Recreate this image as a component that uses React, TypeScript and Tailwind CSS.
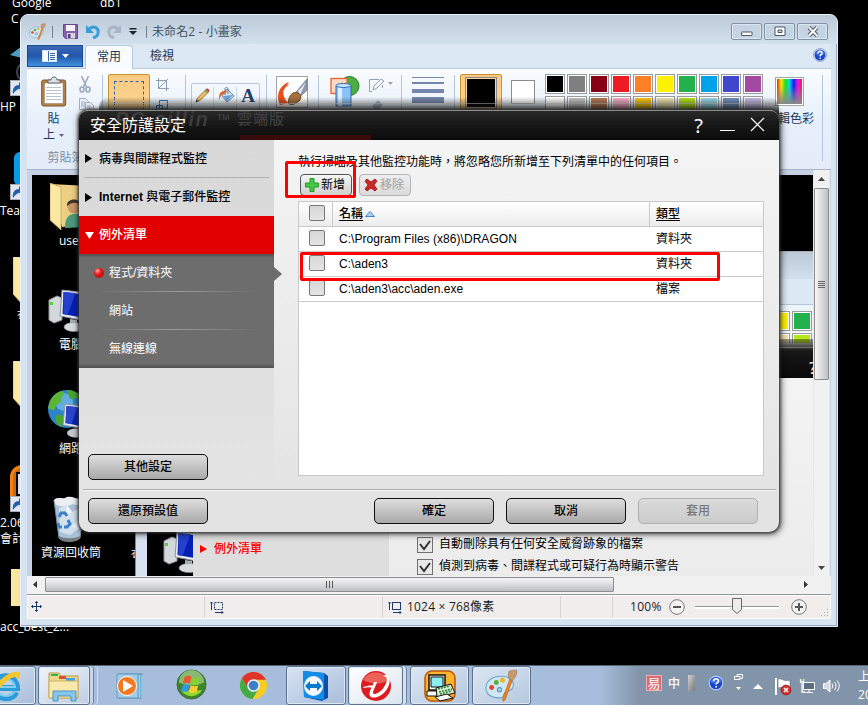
import { FC, ReactNode } from "react";

const uiFont = "font-['Open_Sans','Noto_Sans_CJK_TC',sans-serif]";
const dialogFont = "font-['Liberation_Sans','Noto_Sans_CJK_TC',sans-serif]";

const paletteTop = ["#000000", "#7f7f7f", "#880015", "#ed1c24", "#ff7f27", "#fff200", "#22b14c", "#00a2e8", "#3f48cc", "#a349a4"];
const paletteBottom = ["#ffffff", "#c3c3c3", "#b97a57", "#ffaec9", "#ffc90e", "#efe4b0", "#b5e61d", "#99d9ea", "#7092be", "#c8bfe7"];

const rows = [
  { name: "C:\\Program Files (x86)\\DRAGON", type: "資料夾" },
  { name: "C:\\aden3", type: "資料夾" },
  { name: "C:\\aden3\\acc\\aden.exe", type: "檔案" },
];

/* ---------- icons ---------- */

const PaletteIcon: FC<{ size: number }> = ({ size }) => (
  <svg width={size} height={size} viewBox="0 0 32 32">
    <path d="M1 20C0 11 8 7 16 7c9 0 13 5 11 11-2 5-6 2-8 5s0 5-5 5C7 28 2 26 1 20z" fill="#cfe6f5" stroke="#6fa3c8" strokeWidth="1" />
    <circle cx="6.500" cy="18" r="2.400" fill="#e5432e" />
    <circle cx="11" cy="13" r="2.400" fill="#58b030" />
    <circle cx="17" cy="11" r="2.400" fill="#f0b51e" />
    <circle cx="14" cy="20" r="2" fill="#a7cde6" stroke="#5c90b6" />
    <path d="M17 29l7-19 2.500 1-7 19c-1 2-3 1-2.500-1z" fill="#ee8122" stroke="#b85b12" strokeWidth=".5" />
    <path d="M23.500 10c-1-3-1-6 0-8l7-1c1 4-1 7-4 10z" fill="#c99a6b" stroke="#95663a" strokeWidth=".5" />
  </svg>
);

const HelpIcon: FC<{ size: number }> = ({ size }) => (
  <svg width={size} height={size} viewBox="0 0 16 16">
    <circle cx="8" cy="8" r="7.5" fill="#e4edfb" stroke="#6f93d6" strokeWidth=".8" />
    <circle cx="8" cy="8" r="6.3" fill="#1b45c8" />
    <path d="M2.5 7a5.6 5.6 0 0 1 11 0c-3 2-8 2-11 0z" fill="#5a8cf0" opacity=".6" />
    <path d="M5.6 6.2c0-3.4 5-3 4.8-.2-.1 1.7-2.3 1.6-2.3 3.6M8.1 11v1.6" fill="none" stroke="#fff" strokeWidth="1.7" />
  </svg>
);

const FolderIcon: FC<{ className?: string }> = ({ className }) => (
  <svg className={className} width="40" height="48" viewBox="0 0 40 48">
    <path d="M10 1l30 2v40l-30-3z" fill="#e8c870" />
    <path d="M0 0l3-1 14 3v40l-8 5L0 37z" fill="#fbe9a3" stroke="#d3b35c" strokeWidth=".8" />
    <path d="M10 3v43l7-4V3z" fill="#e4c46b" />
  </svg>
);

const UserFolderIcon = () => (
  <svg width="40" height="48" viewBox="0 0 40 48">
    <path d="M0 1l40 2v38l-28 3z" fill="#eccf82" />
    <path d="M0 0l11 4v43L0 37z" fill="#fbe9a3" stroke="#c8a652" strokeWidth=".8" />
    <path d="M15 45c0-13 6-15 13-14h9v13z" fill="#4c9a79" />
    <circle cx="24" cy="24" r="6.5" fill="#c99468" />
    <path d="M17 23c-1-8 13-9 14-1-5-3-9-3-14 1z" fill="#39342d" />
  </svg>
);

const ComputerIcon = () => (
  <svg width="46" height="44" viewBox="0 0 46 44">
    <path d="M1 11l8-4 5 2v22l-8 3-5-3z" fill="#d5d8da" stroke="#8e9296" />
    <rect x="2" y="13" width="3" height="3" fill="#56d432" />
    <path d="M14 1l26 3-2 28-26-5z" fill="#e7e9ec" stroke="#8b929b" />
    <path d="M15.500 3l23 3-2 23-22-4z" fill="#0420b4" />
    <path d="M15.500 3l12 1-8 22-4-1z" fill="#2440cc" />
    <path d="M22 30l7 1v5h-7z" fill="#aaaeb3" />
    <ellipse cx="26" cy="38" rx="10" ry="4.500" fill="#d9dcdf" stroke="#8f9499" strokeWidth=".6" />
  </svg>
);

const NetworkIcon = () => (
  <svg width="44" height="50" viewBox="0 0 44 50">
    <circle cx="20" cy="20" r="19" fill="#2d85c8" />
    <circle cx="17" cy="13" r="9" fill="#76bfe8" opacity=".7" />
    <path d="M3 12C8 3 15 1 17 3c1 4-4 4-2 8-3 5-6 3-7 9-2 2-6 0-7-1z" fill="#5cb534" />
    <path d="M20 1c8 0 14 5 17 10l-8-2-6 1zM9 27c4-3 9 0 8 4l-3 7c-3-2-7-6-5-11z" fill="#4aa52b" />
    <path d="M18 15l26 3v23l-28-5z" fill="#e2e6ee" stroke="#8c94a3" />
    <path d="M19.500 17l24 3v19l-25-5z" fill="#0822b6" />
    <path d="M19.500 17l11 1-6 17-6-1z" fill="#2a47cc" />
    <ellipse cx="29" cy="44" rx="9" ry="4.500" fill="#c4c8cc" />
  </svg>
);

const RecycleBinIcon = () => (
  <svg width="34" height="46" viewBox="0 0 34 46">
    <path d="M1 4h31l-5 38c-3 4-18 4-21 0z" fill="#a9c2d8" stroke="#8296a8" />
    <path d="M1 4c4-4 9 0 13-3 6-1 10 3 18 2l-2 8-10-3-8 3-9-2z" fill="#eceff2" />
    <path d="M6 12l8-3 5 7 9-5-2 22-9 6-10-3z" fill="#d3e1ee" />
    <path d="M14 9l5 7-7 5zM19 30l8-8-2 12z" fill="#eef4f9" />
    <path d="M6 21l2-4h4l2 3M15 24l2 4-3 3h-3M9 31H6l-1-4" fill="none" stroke="#3d7fcb" strokeWidth="3" />
    <path d="M6 40c5 3 16 3 21 0l-.5 3c-4 4-17 4-20 0z" fill="#777c80" />
  </svg>
);

const ShortcutIcon = () => (
  <svg width="16" height="16" viewBox="0 0 16 16">
    <rect x=".5" y=".5" width="15" height="15" fill="#e4e8ee" stroke="#a8adb5" />
    <path d="M3 14C2 8 5 5 9 5V2l6 5-5 5V9c-3 0-5 2-7 5z" fill="#2361b3" />
  </svg>
);

const ClipboardIcon = () => (
  <svg width="26" height="32" viewBox="0 0 26 32">
    <rect x=".7" y="4" width="24" height="26" rx="2" fill="#b3814b" stroke="#7b542a" />
    <rect x="3.500" y="7" width="18.500" height="20.500" fill="#fff" stroke="#94785c" strokeWidth=".5" />
    <path d="M5 11.500h15M5 14.500h15M5 17.500h15M5 20.500h15M5 23.500h15" stroke="#b7c2cf" />
    <path d="M7 7V4h3c0-4 6-4 6 0h3v3z" fill="#dde1e6" stroke="#626970" />
  </svg>
);

const CutIcon = () => (
  <svg width="12" height="17" viewBox="0 0 12 17" fill="none" stroke="#9aa9bd" strokeWidth="1.6">
    <path d="M2.500 0l5 11M9.500 0l-5 11" />
    <ellipse cx="3" cy="13.500" rx="2" ry="2.500" />
    <ellipse cx="9" cy="13.500" rx="2" ry="2.500" />
  </svg>
);

const CopyIcon = () => (
  <svg width="16" height="15" viewBox="0 0 16 15" fill="#eaf0f7" stroke="#a3b0c2">
    <path d="M.5.5h6l3 3v8h-9zM2 4h4M2 6h4M2 8h4" />
    <path d="M6.500 4.500h5l3 3v7h-8zM8 8h4M8 10h5M8 12h5" />
  </svg>
);

const PencilIcon = () => (
  <svg width="17" height="17" viewBox="0 0 17 17">
    <path d="M2.500 14.500L3.500 11 12 2.500l2.500 2.500-8.500 8.500z" fill="#f0bd62" stroke="#85602b" strokeWidth=".8" />
    <path d="M12 2.500c1-2 4.500.5 2.500 2.500z" fill="#dc4855" stroke="#a33" strokeWidth=".5" />
    <path d="M10.500 4L12 2.500 14.500 5 13 6.500z" fill="#74a265" />
    <path d="M1.500 15.500l1-3 2 2z" fill="#333" />
  </svg>
);

const BucketIcon = () => (
  <svg width="17" height="17" viewBox="0 0 17 17">
    <path d="M9 2l7 7-7 6-5-6z" fill="#d6e8f8" stroke="#5b86ad" />
    <path d="M5 9l10-1-6 6z" fill="#6ba0d4" />
    <path d="M7 8V2c0-2 3-2 3 0v5" fill="none" stroke="#6c7a89" />
    <path d="M9 4C3 3 0 7 1.500 13c1-4 2-6 6-7z" fill="#e95c24" />
  </svg>
);

const BrushIcon = () => (
  <svg width="32" height="32" viewBox="0 0 32 32">
    <rect x=".5" y=".5" width="31" height="31" fill="#fff" stroke="#a4a4a4" />
    <path d="M4 29C-1 19 4 9 13 6l-2 3 3-1c-9 5-8 12-2 19z" fill="#e6501e" />
    <path d="M20 16L31 3v11l-7 7z" fill="#8f9bad" stroke="#5e6a7c" strokeWidth=".6" />
    <path d="M22 15l8-9-6 13z" fill="#dde4ee" />
    <path d="M12 27c1-8 5-12 10-10 5 3 3 8-2 10-3 2-6 2-8 0z" fill="#a8703f" stroke="#76461f" />
  </svg>
);

const ShapesIcon = () => (
  <svg width="31" height="31" viewBox="0 0 31 31">
    <circle cx="19.500" cy="10" r="9.500" fill="#4cae42" stroke="#277c28" />
    <rect x="1" y="2.500" width="16" height="15" fill="#fcd9c5" stroke="#e5632b" strokeWidth="1.300" />
    <path d="M6 10v20h15V10z" fill="#8cc1f4" stroke="#2b6fb9" />
    <path d="M8 11v19h4V11z" fill="#dcefff" />
    <ellipse cx="13.500" cy="9.500" rx="7.500" ry="2" fill="#c7e2fb" stroke="#2b6fb9" />
  </svg>
);

const GlyphMove = () => (
  <svg width="12" height="12" viewBox="0 0 12 12" stroke="#1d3c6e" fill="none">
    <path d="M5.500 .5v10M.5 5.500h10M4 2L5.500.5 7 2M4 9l1.500 1.500L7 9M2 4L.5 5.500 2 7M9 4l1.500 1.500L9 7" />
  </svg>
);

const GlyphSize: FC<{ dashed?: boolean }> = ({ dashed }) => (
  <svg width="14" height="13" viewBox="0 0 14 13" stroke="#1d3c6e" fill="none">
    <rect x="4.500" y="1.500" width="8" height="7" strokeDasharray={dashed ? "2 1" : undefined} />
    <path d="M1.500 9V1M0 2.500L1.500 1 3 2.500M5 11.500h8M11.500 10l1.500 1.500-1.500 1.500" />
  </svg>
);

const Swatch: FC<{ color: string }> = ({ color }) => (
  <div className="h-5 w-5 border border-[#9b9b9b] bg-white p-px">
    <div className="h-full w-full" style={{ backgroundColor: color }} />
  </div>
);

/* ---------- desktop ---------- */

const DesktopIcons = () => (
  <div className={`absolute inset-0 text-[12px] leading-4 text-white ${uiFont}`}>
    <span className="absolute left-[12px] -top-[5px]">Google</span>
    <span className="absolute left-[100px] -top-[5px]">db1</span>
    <span className="absolute left-[11px] top-[11px]">C</span>
    <svg className="absolute left-[10px] top-[46px]" width="12" height="36" viewBox="0 0 12 36">
      <path d="M0 9L12 0v12z" fill="#4c9cc5" />
      <circle cx="17" cy="26" r="10" fill="none" stroke="#3c4048" strokeWidth="2" />
    </svg>
    <div className="absolute left-[10px] top-[80px]"><ShortcutIcon /></div>
    <span className="absolute left-0 top-[99px]">HP</span>
    <div className="absolute left-[14px] top-[152px] h-[34px] w-10 rounded-md bg-[#0b9be6]" />
    <div className="absolute left-[10px] top-[184px]"><ShortcutIcon /></div>
    <span className="absolute left-0 top-[203px]">Tea</span>
    <FolderIcon className="absolute left-[13px] top-[257px]" />
    <span className="absolute left-[17px] top-[308px] text-[10px] leading-[12px]">衣</span>
    <FolderIcon className="absolute left-[13px] top-[361px]" />
    <div className="absolute left-[10px] top-[465px] h-[46px] w-12 rounded-xl border-[3px] border-[#f58010] bg-[#c06b1a]">
      <div className="ml-[3px] mt-1 h-6 w-6 border-2 border-black bg-[#ddd]" />
    </div>
    <div className="absolute left-[10px] top-[496px]"><ShortcutIcon /></div>
    <span className="absolute left-0 top-[515px]">2.06</span>
    <span className="absolute left-0 top-[531px]">會計</span>
    <div className="absolute left-[11px] top-[569px] h-[37px] w-10 bg-gradient-to-r from-[#fbe9a3] to-[#f0d27a]" />
    <span className="absolute left-0 top-[619px]">acc_best_2...</span>
  </div>
);

/* ---------- paint window ---------- */

const TitleBar = () => (
  <div className="flex h-[29px] shrink-0 items-center rounded-t-md bg-gradient-to-b from-[#bccad7] to-[#d3e1ee] pl-2 pr-[9px] pt-1">
    <PaletteIcon size={17} />
    <div className="ml-[6px] h-3 w-px bg-[#71808e]" />
    <svg className="ml-[10px]" width="15" height="15" viewBox="0 0 15 15">
      <path d="M.5.5h14v14h-12l-2-2z" fill="#8960ae" stroke="#694591" />
      <rect x="3" y="1" width="9" height="6" fill="#f4f1f8" />
      <rect x="4" y="9" width="8" height="5.500" fill="#d8d4df" />
      <rect x="5" y="10" width="2.500" height="4" fill="#51406b" />
    </svg>
    <svg className="ml-2" width="14" height="15" viewBox="0 0 14 15">
      <path d="M0 1v8h8z" fill="#399fdc" />
      <path d="M3 5c5-4 10-1 9 4 0 2-2 4-5 5" fill="none" stroke="#399fdc" strokeWidth="3" />
    </svg>
    <svg className="ml-[7px]" width="14" height="15" viewBox="0 0 14 15">
      <path d="M14 1v8H6z" fill="#a7b6c7" />
      <path d="M11 5C6 1 1 4 2 9c0 2 2 4 5 5" fill="none" stroke="#a7b6c7" strokeWidth="3" />
    </svg>
    <svg className="ml-2" width="8" height="7" viewBox="0 0 8 7"><path d="M.5 0h7v1.500h-7zM0 3h8L4 7z" fill="#1c2229" /></svg>
    <div className="ml-[9px] h-3 w-px bg-[#71808e]" />
    <span className="ml-[5px] text-[12px] tracking-[0.1px] text-[#42525f]">未命名2 - 小畫家</span>
    <div className="ml-auto flex gap-[2px]">
      {["min", "max", "close"].map((kind) => (
        <div key={kind} className="flex h-[17px] w-[31px] items-center justify-center rounded-[2px] border border-[#8393a7] bg-[#c5d4e2] shadow-[inset_0_0_0_1px_#dbe6f0]">
          <svg width="12" height="11" viewBox="0 0 12 11">
            {kind === "min" && <rect x=".5" y="6" width="10.500" height="3.500" rx=".5" fill="#fff" stroke="#4c5768" />}
            {kind === "max" && <path d="M1 1h10v8.500H1zM4 4v2.500h4V4z" fill="#fff" fillRule="evenodd" stroke="#4c5768" />}
            {kind === "close" && (
              <>
                <path d="M2 1.500l8 8M10 1.500l-8 8" stroke="#4c5768" strokeWidth="4" />
                <path d="M2 1.500l8 8M10 1.500l-8 8" stroke="#fff" strokeWidth="2" />
              </>
            )}
          </svg>
        </div>
      ))}
    </div>
  </div>
);

const TabRow = () => (
  <div className="flex h-[25px] shrink-0 items-start border-b border-[#b8c9de] bg-[#dde8f5] text-[12px] text-[#1e395b]">
    <div className="mt-px flex h-[22px] w-14 items-center justify-center gap-[5px] border border-[#1b4a91] bg-gradient-to-b from-[#3968b5] via-[#2257ab] to-[#4192df]">
      <svg width="15" height="12" viewBox="0 0 15 12">
        <rect x=".5" y=".5" width="14" height="11" fill="#fff" stroke="#d6e4f4" />
        <path d="M6.500 1v10M8 3.500h5M8 5.500h5M8 7.500h5M8 9.500h5" stroke="#3768aa" />
      </svg>
      <svg width="7" height="4" viewBox="0 0 7 4"><path d="M0 0h7L3.500 4z" fill="#fff" /></svg>
    </div>
    <div className="ml-[2px] mt-px flex h-[25px] w-12 items-center justify-center rounded-t-[3px] border border-b-0 border-[#b4c8e0] bg-[#f8fbff] pb-[3px]">常用</div>
    <div className="ml-[17px] mt-[3px]">檢視</div>
    <div className="ml-auto mr-1 mt-[4px]"><HelpIcon size={14} /></div>
  </div>
);

const RibbonGroup: FC<{ className: string; children: ReactNode }> = ({ className, children }) => (
  <div className={`flex h-[86px] shrink-0 items-start border-r border-[#b4c6dc] ${className}`}>{children}</div>
);

const Ribbon = () => (
  <div className="flex h-[101px] shrink-0 overflow-hidden border-b border-[#a5b6cc] bg-gradient-to-b from-[#fafcff] via-[#e7f0fa] to-[#e4ecf8] pt-[6px] text-[12px] text-[#1e395b]">
    <RibbonGroup className="w-[76px]">
      <div className="flex w-[53px] flex-col items-center">
        <div className="mt-px"><ClipboardIcon /></div>
        <span className="mt-[2px] leading-[17px]">貼</span>
        <span className="flex items-center gap-1 leading-[16px]">上<svg width="5" height="3" viewBox="0 0 5 3"><path d="M0 0h5L2.500 3z" fill="#566b88" /></svg></span>
        <span className="mt-[6px] w-10 whitespace-nowrap pl-[14px] leading-[17px] text-[#7e8fa6]">剪貼簿</span>
      </div>
      <div className="-ml-px flex flex-col gap-[5px] pt-px">
        <CutIcon />
        <CopyIcon />
      </div>
    </RibbonGroup>
    <RibbonGroup className="w-[83px] pl-[5px]">
      <div className="-mt-[1px] h-[66px] w-[42px] rounded-[2px] border border-[#c5942d] bg-gradient-to-b from-[#f9c982] to-[#fde19d] px-[5px] pt-[6px]">
        <div className="h-10 border border-dashed border-[#3165a8]" />
      </div>
      <div className="ml-[6px] flex flex-col gap-2 pt-[3px]">
        <svg width="13" height="13" viewBox="0 0 13 13" stroke="#8b9db7" fill="none"><path d="M2.500 0v10.500H13M0 2.500h10.500V13M3 10l9-9" /></svg>
        <svg width="13" height="13" viewBox="0 0 13 13" stroke="#2871a6" fill="none"><path d="M3.500 1.500h8v8h-8zM.5 6.500h6v6h-6z" /></svg>
      </div>
    </RibbonGroup>
    <RibbonGroup className="w-[81px] pl-[5px] pt-2">
      <div className="flex h-[50px] w-[69px] divide-x divide-[#cad6e4] rounded-[2px] border border-[#b9c8dc] pt-[3px]">
        <div className="w-[22px] pl-[2px]"><PencilIcon /></div>
        <div className="w-6 pl-1"><BucketIcon /></div>
        <div className="w-[22px] text-center font-['Liberation_Serif',serif] text-[19px] font-bold leading-[18px] text-[#243d63]">A</div>
      </div>
    </RibbonGroup>
    <RibbonGroup className="w-[52px] pl-[9px] pt-px"><BrushIcon /></RibbonGroup>
    <RibbonGroup className="w-[83px] pl-[11px] pt-px">
      <ShapesIcon />
      <div className="ml-2 flex flex-col gap-[6px] pt-[2px]">
        <svg width="24" height="14" viewBox="0 0 24 14" fill="none" stroke="#8fa0b8"><path d="M10 1.500H.5v12H3M13.500 7v3M4 12l1-4 7-7 3 2-7 7z" /><path d="M19 4h5l-2.500 3z" fill="#8fa0b8" stroke="none" /></svg>
        <svg width="24" height="14" viewBox="0 0 24 14"><path d="M3 8l6-6 5 5-6 6z" fill="#aab8ca" /></svg>
      </div>
    </RibbonGroup>
    <RibbonGroup className="w-[53px] flex-col pl-[10px]">
      <div className="mt-[2px] h-px w-8 bg-[#7587ad]" />
      <div className="mt-1 h-[2px] w-8 bg-[#7587ad]" />
      <div className="mt-[5px] h-1 w-8 bg-[#7587ad]" />
      <div className="mt-1 h-[6px] w-8 bg-[#7587ad]" />
    </RibbonGroup>
    <RibbonGroup className="w-[368px] pl-[5px]">
      <div className="-mt-[1px] h-[66px] w-[42px] rounded-[2px] border border-[#c5942d] bg-gradient-to-b from-[#f9c982] to-[#fde19d] px-1 pt-[2px]">
        <div className="h-8 w-8 border border-[#888] bg-[#f9d79f] p-px"><div className="h-full bg-black" /></div>
      </div>
      <div className="ml-[9px] mt-[5px] h-6 w-6 border border-[#8c8c8c] bg-white" />
      <div className="ml-[10px] -mt-px flex flex-col gap-[2px]">
        <div className="flex gap-[2px]">{paletteTop.map((c) => <Swatch key={c} color={c} />)}</div>
        <div className="flex gap-[2px]">{paletteBottom.map((c) => <Swatch key={c} color={c} />)}</div>
      </div>
      <div className="-ml-[5px] flex w-[58px] flex-col items-center">
        <div className="ml-[5px] mt-[2px] h-[29px] w-[29px] border border-[#a6a6a6] bg-white p-px">
          <div className="h-full bg-[linear-gradient(to_bottom,transparent_25%,#888),linear-gradient(to_right,#f02010,#f7ee00,#20e020,#00d5f0,#1020f0,#f010e0,#f02040)]" />
        </div>
        <span className="mt-1 whitespace-nowrap pl-[6px] leading-[18px]">編輯色彩</span>
      </div>
    </RibbonGroup>
  </div>
);

/* the screenshot opened in the paint canvas */
const CanvasPicture = () => (
  <div className="relative h-[401px] w-[781px] overflow-hidden bg-black text-[12px] text-white">
    <div className="absolute left-[18px] top-[8px]"><UserFolderIcon /></div>
    <span className="absolute left-[27px] top-[57px]">user</span>
    <div className="absolute left-[16px] top-[114px]"><ComputerIcon /></div>
    <span className="absolute left-[27px] top-[161px]">電腦</span>
    <div className="absolute left-[15px] top-[214px]"><NetworkIcon /></div>
    <span className="absolute left-[27px] top-[265px]">網路</span>
    <div className="absolute left-[21px] top-[321px]"><RecycleBinIcon /></div>
    <span className="absolute left-[9px] top-[369px]">資源回收筒</span>
    <span className="absolute left-[99px] top-[371px] text-[10px]">衣</span>
    <div className="absolute left-[103px] top-[76px] flex h-[325px] w-[700px] flex-col border-l border-[#888] bg-[#d6e2ef] pl-[11px]">
      <div className="h-7 shrink-0 border-t border-[#a1adb8] bg-gradient-to-b from-[#bccad7] to-[#d3e1ee]" />
      <div className="h-[26px] shrink-0 border-b border-[#b3c4da] bg-[#dde8f5]" />
      <div className="flex h-[38px] shrink-0 flex-col items-end gap-[2px] bg-[#edf4fc] pr-[23px] pt-[6px]">
        <div className="flex gap-[2px]"><Swatch color="#fff200" /><Swatch color="#22b14c" /></div>
        <div className="flex gap-[2px]"><Swatch color="#efe4b0" /><Swatch color="#b5e61d" /></div>
      </div>
      <div className="flex grow bg-black">
        <div className="mt-[187px] h-[46px] w-[46px] overflow-hidden pl-4"><ComputerIcon /></div>
        <div className="w-[196px] bg-[#dedede]" />
        <div className="grow bg-gradient-to-b from-[#f5f5f5] to-[#ececec]" />
      </div>
    </div>
    <div className="absolute left-[740px] top-[164px] h-[39px] w-[41px] bg-gradient-to-b from-[#1d1f16]/40 via-[#181818] via-30% to-[#0a0a0a]">
      <div className="mt-2 border-t border-[#717171] pl-[37px] pt-[10px] text-[17px] leading-5">?</div>
    </div>
    <div className={`absolute left-[168px] top-[365px] flex items-center gap-[7px] font-medium text-[#ff0000] ${dialogFont}`}>
      <svg width="7" height="8" viewBox="0 0 7 8"><path d="M0 0l7 4-7 4z" fill="#f00" /></svg>
      <span>例外清單</span>
    </div>
    <div className={`absolute left-[385px] top-[358px] flex flex-col text-black ${dialogFont}`}>
      {["自動刪除具有任何安全威脅跡象的檔案", "偵測到病毒、間諜程式或可疑行為時顯示警告"].map((text) => (
        <div key={text} className="flex h-[22px] items-center gap-[6px]">
          <svg className="mt-px" width="16" height="16" viewBox="0 0 16 16">
            <rect x=".5" y=".5" width="15" height="15" fill="#e8e8e8" stroke="#707070" />
            <path d="M3 7l4 5 6-8" fill="none" stroke="#333" strokeWidth="2" />
          </svg>
          <span className="whitespace-nowrap">{text}</span>
        </div>
      ))}
    </div>
  </div>
);

const VerticalScroll = () => (
  <div className="flex w-[17px] shrink-0 flex-col items-center border-x border-[#e7e7e7] bg-[#f1f1f1]">
    <svg className="mt-[7px]" width="7" height="4" viewBox="0 0 7 4"><path d="M0 4h7L3.500 0z" fill="#444" /></svg>
    <div className="mt-[7px] flex h-[192px] w-[15px] items-center justify-center rounded-[1px] border border-[#8e8e8e] bg-gradient-to-r from-[#f6f6f6] via-[#dcdcdf] to-[#bdbec4]">
      <div className="flex flex-col gap-px">
        {[0, 1, 2, 3].map((i) => <div key={i} className="h-px w-[7px] bg-[#666]" />)}
      </div>
    </div>
    <svg className="mb-[6px] mt-auto" width="7" height="4" viewBox="0 0 7 4"><path d="M0 0h7L3.500 4z" fill="#444" /></svg>
  </div>
);

const HorizontalScroll = () => (
  <div className="flex h-[19px] shrink-0 items-center border-b border-[#8f969e] bg-[#f1f1f1] pb-[2px]">
    <svg className="ml-[6px]" width="4" height="7" viewBox="0 0 4 7"><path d="M4 0v7L0 3.500z" fill="#333" /></svg>
    <div className="ml-2 flex h-[15px] w-[569px] items-center justify-center rounded-[1px] border border-[#8e8e8e] bg-gradient-to-b from-[#f6f6f6] via-[#dcdcdf] to-[#bdbec4]">
      <div className="flex gap-[2px]">
        {[0, 1, 2].map((i) => <div key={i} className="h-[7px] w-px bg-[#555]" />)}
      </div>
    </div>
    <svg className="ml-auto mr-[23px]" width="4" height="7" viewBox="0 0 4 7"><path d="M0 0v7l4-3.500z" fill="#333" /></svg>
  </div>
);

const ZoomButton: FC<{ plus?: boolean }> = ({ plus }) => (
  <svg width="16" height="16" viewBox="0 0 16 16">
    <circle cx="8" cy="8" r="7.300" fill="#f3f3f3" stroke="#777" />
    <path d={plus ? "M4 8h8M8 4v8" : "M4 8h8"} stroke="#555" strokeWidth="2" />
  </svg>
);

const StatusBar = () => (
  <div className="flex h-[24px] shrink-0 items-center border border-white bg-[#f1edec] text-[12px] text-[#1c1c1c]">
    <div className="flex h-full w-[177px] items-center border-r border-[#d5d5d5] pl-[3px]"><GlyphMove /></div>
    <div className="flex h-full w-[178px] items-center border-r border-[#d5d5d5] pl-[5px]"><GlyphSize dashed /></div>
    <div className="flex h-full w-[178px] items-center gap-[5px] border-r border-[#d5d5d5] pl-[5px]"><GlyphSize /><span className="tracking-[0.2px]">1024 × 768像素</span></div>
    <div className="h-full w-[52px] border-r border-[#d5d5d5]" />
    <span className="ml-[17px] w-[33px] tracking-[0.3px]">100%</span>
    <div className="ml-[6px]"><ZoomButton /></div>
    <div className="ml-[10px] flex h-[3px] w-[84px] items-center justify-center border-t border-[#999] bg-white">
      <svg className="mb-[3px] shrink-0" width="10" height="16" viewBox="0 0 10 16"><path d="M.5.5h9v11L5 15.500.5 11.500z" fill="#ededed" stroke="#666" /></svg>
    </div>
    <div className="ml-3"><ZoomButton plus /></div>
    <svg className="ml-auto mr-[1px] mt-3" width="9" height="9" viewBox="0 0 9 9" fill="#a9a9a9"><path d="M7 0h1v1H7zM7 3h1v1H7zM7 6h1v1H7zM4 3h1v1H4zM4 6h1v1H4zM1 6h1v1H1z" /></svg>
  </div>
);

const PaintWindow = () => (
  <div className={`absolute left-[20px] top-[14px] flex h-[613px] w-[818px] flex-col rounded-t-lg border border-[#e7f0f8] bg-[#d6e4f1] shadow-[inset_-1px_-1px_0_#97a7b8] ${uiFont}`}>
    <TitleBar />
    <div className="mx-[6px] flex h-[575px] flex-col">
      <TabRow />
      <Ribbon />
      <div className="flex h-[406px] shrink-0 bg-[#c7d1e3]">
        <div className="w-[786px] pl-[5px] pt-[5px]"><CanvasPicture /></div>
        <VerticalScroll />
      </div>
      <HorizontalScroll />
      <StatusBar />
    </div>
  </div>
);

/* ---------- security dialog ---------- */

const DialogButton: FC<{ label: string; disabled?: boolean }> = ({ label, disabled }) => (
  <button
    className={`h-[26px] w-[120px] rounded-[5px] border bg-gradient-to-b text-[12px] font-medium leading-[22px] ${
      disabled ? "border-[#b1b1b1] from-[#dadada] to-[#cbcbcb] text-[#777]" : "border-[#111] from-[#dedede] to-[#a9a9a9] text-black"
    }`}
  >
    {label}
  </button>
);

const CheckBox = () => <div className="h-4 w-4 shrink-0 rounded-[2px] border border-[#777] bg-gradient-to-b from-[#d7d7d7] to-[#e4e4e4]" />;

const DialogHeader = () => (
  <div className="relative flex h-[30px] shrink-0 items-center overflow-hidden rounded-t-[9px] border-t border-[#8b8b8b] bg-gradient-to-b from-[#292929] via-[#161616] to-[#0c0c0c] pl-[11px] pr-[14px] text-white">
    <div className="absolute -top-px left-9 whitespace-nowrap text-[20px] font-bold italic leading-[18px] tracking-[1.6px] text-[#3c3c3c]">PC-cillin</div>
    <div className="absolute top-0 left-[137px] text-[14px] leading-4 text-[#444]">™</div>
    <div className="absolute -top-px left-[158px] text-[15px] leading-[18px] tracking-[1px] text-[#444]">雲端版</div>
    <div className="absolute bottom-0 left-[161px] h-[5px] w-[131px] bg-[#380b0b]" />
    <span className="relative text-[16px] leading-5">安全防護設定</span>
    <span className="ml-auto mr-[17px] font-['Noto_Sans',sans-serif] text-[20px] leading-6">?</span>
    <svg width="16" height="18" viewBox="0 0 16 18"><path d="M0 13.500h15" stroke="#fff" /></svg>
    <svg className="-mt-[2px] ml-[14px]" width="15" height="15" viewBox="0 0 15 15"><path d="M1 1l13 13M14 1L1 14" stroke="#fff" strokeWidth="1.200" /></svg>
  </div>
);

const SideNav = () => (
  <div className="flex w-[195px] shrink-0 flex-col bg-gradient-to-b from-[#d8d8d8] to-[#e4e4e4] text-[12px] font-bold">
    {["病毒與間諜程式監控", "Internet 與電子郵件監控"].map((label, idx) => (
      <div key={label} className={`mx-[5px] flex h-[38px] items-center ${idx === 0 ? "border-b border-[#b2b2b2]" : ""}`}>
        <svg className="mr-[7px] ml-[1px]" width="7" height="9" viewBox="0 0 7 9"><path d="M0 0l7 4.500L0 9z" /></svg>
        <span className="whitespace-nowrap font-medium">{label.startsWith("Internet") ? <><b>Internet</b>{label.slice(8)}</> : label}</span>
      </div>
    ))}
    <div className="flex h-[38px] items-center bg-[#e30000] pl-[6px] text-white">
      <svg className="mr-[5px]" width="9" height="7" viewBox="0 0 9 7"><path d="M0 0h9L4.500 7z" fill="#fff" /></svg>
      <span className="font-medium">例外清單</span>
    </div>
    <div className="relative flex h-[114px] flex-col bg-[#6d6d6d] font-normal text-white shadow-[inset_0_4px_3px_-2px_#505050,inset_0_-4px_3px_-2px_#505050]">
      {["程式/資料夾", "網站", "無線連線"].map((label, idx) => (
        <div key={label} className="flex h-[38px] items-center">
          <div className="flex w-[30px] justify-end pr-[5px]">
            {idx === 0 && <div className="h-[10px] w-[10px] rounded-full bg-[radial-gradient(circle_at_35%_30%,#ffb0a8,#e91a1a_35%,#a60000)]" />}
          </div>
          <span>{label}</span>
        </div>
      ))}
      <div className="absolute left-[18px] top-[37px] h-px w-[160px] bg-gradient-to-r from-transparent via-[#9b9b9b] to-transparent" />
      <div className="absolute left-[18px] top-[75px] h-px w-[160px] bg-gradient-to-r from-transparent via-[#9b9b9b] to-transparent" />
      <svg className="absolute left-[195px] top-[13px]" width="8" height="14" viewBox="0 0 8 14"><path d="M0 0l8 7-8 7z" fill="#6d6d6d" /></svg>
    </div>
    <div className="mt-auto pb-[9px] pl-[9px]"><DialogButton label="其他設定" /></div>
  </div>
);

const ExclusionTable = () => (
  <div className="mt-[5px] h-[275px] w-[466px] border border-[#c9c9c9] bg-white text-[12px]">
    <div className="flex h-[25px] border-b border-[#cacaca] bg-gradient-to-b from-white to-[#ececec]">
      <div className="flex w-[34px] items-center border-r border-[#cacaca] pl-[10px] pb-[2px]"><CheckBox /></div>
      <div className="flex w-[317px] items-center gap-[2px] border-r border-[#cacaca] pl-[6px] font-medium">
        <span className="underline underline-offset-2">名稱</span>
        <svg width="10" height="6" viewBox="0 0 10 6"><path d="M.5 5.500h9L5 .5z" fill="#a7d2f5" stroke="#4583c4" /></svg>
      </div>
      <div className="flex items-center pl-[6px] font-medium underline underline-offset-2">類型</div>
    </div>
    {rows.map((row) => (
      <div key={row.name} className="flex h-[25px] items-center border-b border-[#cacaca]">
        <div className="w-10 pb-[2px] pl-[10px]"><CheckBox /></div>
        <div className="w-[317px] tracking-[0.04px]">{row.name}</div>
        <div>{row.type}</div>
      </div>
    ))}
  </div>
);

const SecurityDialog = () => (
  <div className={`absolute left-[79px] top-[110px] flex h-[422px] w-[700px] flex-col rounded-[10px] bg-[#e3e3e3] text-black shadow-[0_0_3px_1px_#333,1px_1px_7px_1px_rgba(0,0,0,.65)] ${dialogFont}`}>
    <DialogHeader />
    <div className="flex h-[349px] shrink-0">
      <SideNav />
      <div className="grow bg-gradient-to-b from-[#f4f4f4] to-[#e4e4e4] pl-[24px] pt-[13px]">
        <p className="whitespace-nowrap text-[12px] leading-[18px]">執行掃瞄及其他監控功能時，將忽略您所新增至下列清單中的任何項目。</p>
        <div className="mt-[3px] flex gap-[7px] pl-[2px] text-[12px]">
          <button className="flex h-[22px] w-[52px] items-center gap-[2px] rounded-[4px] border border-[#555] bg-gradient-to-b from-[#f6f6f6] to-[#cfcfcf] pl-[4px]">
            <svg width="14" height="14" viewBox="0 0 14 14"><path d="M5 .5h4V5h4.500v4H9v4.500H5V9H.5V5H5z" fill="#43c943" stroke="#219a2b" /></svg>
            <span>新增</span>
          </button>
          <button className="flex h-[22px] w-[52px] items-center gap-[2px] rounded-[4px] border border-[#b4b4b4] bg-gradient-to-b from-[#eeeeee] to-[#dadada] pl-[4px] text-[#a2a2a2]">
            <svg width="14" height="14" viewBox="0 0 14 14"><path d="M1 3l2-2 4 3 4-3 2 2-3 4 3 4-2 2-4-3-4 3-2-2 3-4z" fill="#cb2626" stroke="#981313" strokeWidth=".8" /></svg>
            <span>移除</span>
          </button>
        </div>
        <ExclusionTable />
      </div>
    </div>
    <div className="ml-1 mr-[3px] flex h-[43px] items-center border-t border-[#aeaeae] pl-[5px] shadow-[inset_0_1px_0_#f2f2f2]">
      <DialogButton label="還原預設值" />
      <div className="ml-[166px] flex gap-3">
        <DialogButton label="確定" />
        <DialogButton label="取消" />
        <DialogButton label="套用" disabled />
      </div>
    </div>
  </div>
);

/* ---------- taskbar ---------- */

const TaskButton: FC<{ className: string; children: ReactNode }> = ({ className, children }) => (
  <div className={`flex h-[39px] shrink-0 items-center justify-center rounded-[3px] border border-[#5d738f] shadow-[inset_0_0_0_1px_#dce8f5] ${className}`}>
    {children}
  </div>
);

const Taskbar = () => (
  <div className="absolute left-0 top-[665px] flex h-10 w-[868px] items-start overflow-hidden border-t border-[#566474] bg-[#a6bedb] bg-[linear-gradient(to_right,#a6bedb_600px,#8294aa_640px)]">
    <TaskButton className="-ml-4 w-[52px] bg-gradient-to-br from-[#d7e3f1] to-[#a8bddb]">
      <svg className="-ml-2" width="34" height="32" viewBox="0 0 34 32">
        <path d="M27 22c-3 9-21 9-21-5s21-15 22 1H11" fill="none" stroke="#2c9bd8" strokeWidth="6" />
        <path d="M26 21c-4 7-17 7-18-3s16-13 18-1H11" fill="none" stroke="#7fd0f3" strokeWidth="2" />
        <path d="M4 27C2 15 20-1 30 2c3 2-1 8-1 8 0-8-14 0-25 17z" fill="#f4c52c" />
      </svg>
    </TaskButton>
    <TaskButton className="ml-[2px] w-[52px] bg-gradient-to-br from-[#f1f5fa] to-[#bfcee2]">
      <svg width="34" height="32" viewBox="0 0 34 32">
        <path d="M2 3h10l2 3h17v22H2z" fill="#efd989" stroke="#b79b4b" />
        <path d="M4 4h7v2H4z" fill="#33b449" /><path d="M12 6h7v3h-7z" fill="#d8502d" /><path d="M19 8h9v3h-9z" fill="#42a4e8" />
        <path d="M2 11h29v17H2z" fill="#f8e9aa" stroke="#cab062" />
        <path d="M6 31V21h23v10h-5v-5H11v5z" fill="#86c5ec" stroke="#4b95c5" />
      </svg>
    </TaskButton>
    <div className="h-full w-[4px] rounded-r border-r border-[#6d829e] bg-[#c8d6e7]" />
    <div className="h-full w-[4px] rounded-r border-r border-[#d5e1ef]" />
    <svg className="ml-[18px] mt-[7px] shrink-0" width="29" height="27" viewBox="0 0 29 27">
      <path d="M3 1h23v24H3z" fill="#76b6dc" stroke="#558fb7" /><path d="M23 2v23M26 2v23" stroke="#b8ddf3" />
      <path d="M1 1h21v24H1z" fill="#9fcde9" stroke="#619bc2" />
      <circle cx="11" cy="13" r="9.500" fill="#f27921" stroke="#fff" />
      <path d="M7 7l10 6-10 6z" fill="#fff" />
    </svg>
    <svg className="ml-[31px] mt-[3px] shrink-0" width="31" height="31" viewBox="0 0 32 32">
      <circle cx="16" cy="16" r="15" fill="#3e8428" stroke="#48673c" />
      <path d="M3 14a13 13 0 0 1 26 0c-8 4-18 4-26 0z" fill="#88b974" />
      <path d="M5 22c5 8 17 8 22 0z" fill="#8bd832" />
      <path d="M9 8c3-2 5-1 7 0l-2 7c-2-1-4-1-7 0z" fill="#f05429" /><path d="M17 9c3 1 5 1 8-1l-2 8c-3 1-5 1-8 0z" fill="#88cf35" />
      <path d="M7 17c3-2 5-1 7 0l-2 7c-2-1-5-1-7 0z" fill="#3399e0" /><path d="M15 17c3 1 5 1 8 0l-2 7c-3 1-5 1-8 0z" fill="#fccb2f" />
    </svg>
    <svg className="ml-[32px] mt-[5px] shrink-0" width="29" height="29" viewBox="0 0 30 30">
      <circle cx="15" cy="15" r="14" fill="#f6cd23" />
      <path d="M3 7.500C9-2 23-1 28 9H15L9 18z" fill="#de3429" />
      <path d="M3 7.500C-3 18 5 28 14 29l6-10-5 2c-3 0-5-2-6-4z" fill="#43aa4a" />
      <circle cx="15" cy="15" r="6.500" fill="#f5f5f5" /><circle cx="15" cy="15" r="5" fill="#397fcc" />
    </svg>
    <TaskButton className="ml-[18px] w-[60px] bg-gradient-to-br from-[#d7e3f1] to-[#a8bddb]">
      <svg width="30" height="32" viewBox="0 0 30 32">
        <path d="M2 1l21 2 4 3v22l-6 3-18-4z" fill="#0750ad" /><path d="M2 1l21 2v27L3 27z" fill="#128eea" />
        <ellipse cx="12.500" cy="16" rx="9.500" ry="10" fill="#f2f8fd" />
        <path d="M4 16l5-5v3h7v-3l5 5-5 5v-3H9v3z" fill="#087acd" />
      </svg>
    </TaskButton>
    <TaskButton className="ml-[2px] w-[55px] bg-gradient-to-br from-[#fff] to-[#dce5ef]">
      <svg width="32" height="32" viewBox="0 0 32 32">
        <circle cx="16" cy="16" r="15" fill="#dc1c20" />
        <path d="M3 10C8 0 24 0 29 10c-8 5-18 4-26 0z" fill="#ee7469" opacity=".8" />
        <path d="M3 17c4-1 8-2 12-1l-2 2c-3-1-6-1-9 0z" fill="#fff" />
        <path d="M14 12l3 0c-1 4-4 8-4 11 1 3 8-1 11-6 4-6 4-11-1-11l2-1c6 0 6 8 2 14-4 7-14 11-17 7-2-3 2-9 4-14z" fill="#fff" />
      </svg>
    </TaskButton>
    <div className="h-full w-[4px] rounded-r border-r border-[#6d829e] bg-[#d5e0ed]" />
    <TaskButton className="ml-[3px] w-[59px] bg-gradient-to-br from-[#dce6f2] to-[#b5c8df]">
      <svg width="32" height="32" viewBox="0 0 32 32">
        <rect x="1" y="1" width="30" height="30" rx="7" fill="#ffb32c" stroke="#bd5507" strokeWidth="1.500" />
        <path d="M5 5h16v15H5z" fill="#fff" stroke="#111" strokeWidth="1.500" /><path d="M7 7h12v10H7z" fill="#8aeef2" stroke="#111" />
        <path d="M3 21h15v5H3z" fill="#fff" stroke="#111" /><path d="M12 18l15-4 4 9-18 4z" fill="#dceccf" stroke="#111" />
        <path d="M14 19l12-3M15 22l13-3M16 24l12-3" stroke="#24883a" strokeWidth="1.500" strokeDasharray="2 1" />
        <path d="M11 27l12-3 6 4-13 3z" fill="#fff" stroke="#111" />
      </svg>
    </TaskButton>
    <TaskButton className="ml-[3px] w-[59px] bg-gradient-to-br from-[#dce6f2] to-[#b5c8df]"><PaletteIcon size={33} /></TaskButton>
    <div className={`ml-auto flex h-full w-[222px] shrink-0 items-start pt-[9px] text-white ${uiFont}`}>
      <div className="h-4 w-4 shrink-0 border border-[#f0adb0] bg-[#d86d75] text-center text-[13px] leading-[14px]">易</div>
      <span className="ml-[6px] text-[12px] font-medium leading-[17px]">中</span>
      <div className="ml-[8px] h-4 w-[7px] shrink-0 bg-gradient-to-br from-[#d4d4d4] to-[#777]" />
      <div className="ml-[13px] shrink-0"><HelpIcon size={16} /></div>
      <svg className="-mt-[1px] ml-[10px] shrink-0" width="9" height="18" viewBox="0 0 9 18" fill="none" stroke="#fff"><path d="M3 2V.5h5.500v4H6M.5 2.500H6v3H.5z" /><path d="M2 13h5l-2.500 3z" fill="#fff" stroke="none" /></svg>
      <svg className="ml-[10px] mt-[9px] shrink-0" width="10" height="5" viewBox="0 0 10 5"><path d="M0 5h10L5 0z" fill="#fff" /></svg>
      <svg className="ml-3 mt-[3px] shrink-0" width="17" height="18" viewBox="0 0 17 18"><path d="M1 0v17" stroke="#fff" strokeWidth="2" /><path d="M3 1c4-1 5 3 12 1v8c-6 2-8-2-12 0z" fill="#fff" stroke="#4b5665" strokeWidth=".5" /><circle cx="11" cy="12" r="4.800" fill="#d8342d" stroke="#a41615" /><path d="M9 10l4 4M13 10l-4 4" stroke="#fff" strokeWidth="1.500" /></svg>
      <svg className="ml-[7px] mt-[3px] shrink-0" width="17" height="16" viewBox="0 0 17 16" fill="#5d6c7f" stroke="#fff"><path d="M4.500 4.500h11v7h-11zM10 12v2M6 14.500h8" /><path d="M1.500 1v3h3V1M3 5v9h3" fill="none" strokeWidth="1.300" /></svg>
      <svg className="ml-[7px] mt-[3px] shrink-0" width="17" height="16" viewBox="0 0 17 16" fill="none" stroke="#fff"><path d="M.5 5.500H3L7 2v12L3 10.500H.5z" fill="#d4dae0" /><path d="M9 5.500c1 2 1 3 0 5M11.500 4c2 3 2 5 0 8M14 2.500c3 4 3 7 0 11" /></svg>
      <div className="-mt-[7px] ml-[18px] flex shrink-0 flex-col text-[12px] leading-[18px]">
        <span>上</span>
        <span>20</span>
      </div>
    </div>
  </div>
);

const App: FC = () => {
  return (
    <div className="relative h-[705px] w-[868px] overflow-hidden bg-black">
      <DesktopIcons />
      <PaintWindow />
      <div className="absolute left-[99px] top-[97px] h-[30px] w-[680px] rounded-t-[10px] bg-gradient-to-b from-transparent via-[#111]/80 to-[#111]" />
      <div className="absolute left-[105px] top-[103px] h-px w-[668px] bg-[#999]/60" />
      <SecurityDialog />
      {/* highlight marks */}
      <div className="absolute left-[285px] top-[161px] h-[37px] w-[71px] rounded-[2px] border-[3px] border-[#ff0000]" />
      <div className="absolute left-[300px] top-[252px] h-[29px] w-[420px] rounded-[2px] border-[3px] border-[#ff0000]" />
      <Taskbar />
    </div>
  );
};

export default App;
